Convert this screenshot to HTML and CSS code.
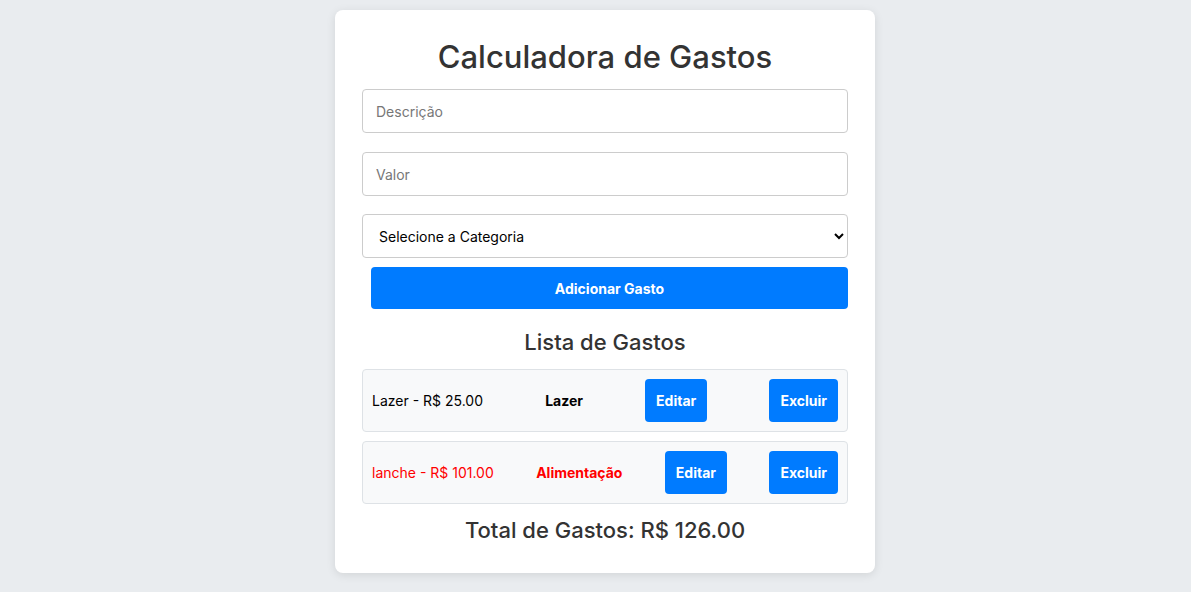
FILE: index.html
```html
<!DOCTYPE html>
<html lang="pt-BR">
<head>
<meta charset="utf-8">
<title>Calculadora de Gastos</title>
<link rel="stylesheet" href="styles.css">
</head>
<body>
<div class="card">
  <h1 class="title">Calculadora de Gastos</h1>
  <input class="field" type="text" placeholder="Descrição">
  <input class="field" type="text" placeholder="Valor">
  <select class="field select">
    <option>Selecione a Categoria</option>
  </select>
  <button class="add-btn">Adicionar Gasto</button>
  <h2 class="subtitle">Lista de Gastos</h2>
  <ul class="list">
    <li class="item">
      <span class="desc">Lazer - R$ 25.00</span>
      <span class="cat">Lazer</span>
      <button class="btn">Editar</button>
      <button class="btn">Excluir</button>
    </li>
    <li class="item red">
      <span class="desc">lanche - R$ 101.00</span>
      <span class="cat">Alimentação</span>
      <button class="btn">Editar</button>
      <button class="btn">Excluir</button>
    </li>
  </ul>
  <h2 class="total">Total de Gastos: R$ 126.00</h2>
</div>
</body>
</html>
```

FILE: styles.css
```css
* { box-sizing: border-box; }

body {
  margin: 0;
  padding: 10px 0 10px 19px;
  background: #e9ecef;
  font-family: Inter, "Open Sans", sans-serif;
  color: #333;
}

.card {
  width: 540px;
  margin: 0 auto;
  background: #fff;
  border-radius: 8px;
  box-shadow: 0 2px 10px rgba(0, 0, 0, 0.1);
  padding: 28px 27px 28px;
  display: flex;
  flex-direction: column;
}

.title {
  margin: 0 0 13px;
  font-size: 31px;
  line-height: 38px;
  font-weight: 500;
  text-align: center;
  color: #333;
}

.field {
  display: block;
  width: 100%;
  height: 44px;
  margin: 0 0 19px;
  padding: 0 13px;
  border: 1px solid #ccc;
  border-radius: 4px;
  font-family: inherit;
  font-size: 14px;
  color: #000;
  background: #fff;
}

.field::placeholder { color: #777; }

.field.select {
  margin-top: -1px;
  margin-bottom: 9px;
  padding: 0 12px;
}

.add-btn {
  margin-left: 9px;
  height: 42px;
  border: none;
  border-radius: 4px;
  background: #007bff;
  color: #fff;
  font-family: inherit;
  font-size: 14px;
  font-weight: 700;
}

.subtitle {
  margin: 19px 0 13px;
  font-size: 22px;
  line-height: 28px;
  font-weight: 500;
  text-align: center;
  color: #333;
}

.list {
  list-style: none;
  margin: 0;
  padding: 0;
  display: flex;
  flex-direction: column;
  gap: 9px;
}

.item {
  display: flex;
  align-items: center;
  justify-content: space-between;
  padding: 9px;
  background: #f8f9fa;
  border: 1px solid #dee2e6;
  border-radius: 4px;
  font-size: 14px;
  color: #000;
}

.item.red { color: #f00; }

.cat { font-weight: 700; }

.btn {
  padding: 11px 11px;
  line-height: 21px;
  border: none;
  border-radius: 4px;
  background: #007bff;
  color: #fff;
  font-family: inherit;
  font-size: 14px;
  font-weight: 700;
}

.total {
  margin: 11px 0 0;
  font-size: 22px;
  line-height: 30px;
  font-weight: 500;
  text-align: center;
  color: #333;
}
```
